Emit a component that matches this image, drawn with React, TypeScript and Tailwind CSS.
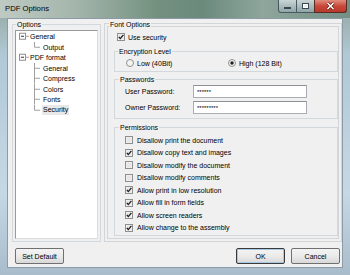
import React from 'react';

const CheckBox = ({ checked }: { checked?: boolean }) => (
  <svg width="8" height="8" viewBox="0 0 8 8" className="shrink-0">
    <rect x="0.5" y="0.5" width="7" height="7" fill="#f6f6f6" stroke="#8e8f8f" />
    <rect x="1.5" y="1.5" width="5" height="5" fill="#e6e6e6" />
    {checked && <path d="M1.8 3.8 L3.3 5.6 L6.4 1.9" fill="none" stroke="#1c1c1c" strokeWidth="1.3" />}
  </svg>
);

const Radio = ({ checked }: { checked?: boolean }) => (
  <svg width="8" height="8" viewBox="0 0 8 8" className="shrink-0">
    <circle cx="4" cy="4" r="3.5" fill="#f4f4f4" stroke="#8e8f8f" />
    {checked && <circle cx="4" cy="4" r="1.7" fill="#1e1e1e" />}
  </svg>
);

const RootRow = ({ label }: { label: string }) => (
  <div className="flex h-[10.5px] items-center">
    <svg width="14" height="10.5" viewBox="0 0 14 10.5" className="shrink-0">
      <rect x="3.5" y="2.25" width="6" height="6" fill="#fff" stroke="#8f8f8f" />
      <path d="M5 5.25 H8" stroke="#333" strokeWidth="1" />
      <path d="M9.5 5.25 H13" stroke="#a0a0a0" strokeWidth="1" />
    </svg>
    <span>{label}</span>
  </div>
);

const ChildRow = ({ label, last, selected }: { label: string; last?: boolean; selected?: boolean }) => (
  <div className="flex h-[10.5px] items-center">
    <svg width="27" height="10.5" viewBox="0 0 27 10.5" className="shrink-0">
      <path d={last ? 'M18.5 0 V5.25' : 'M18.5 0 V10.5'} stroke="#a0a0a0" strokeWidth="1" />
      <path d="M18.5 5.25 H24" stroke="#a0a0a0" strokeWidth="1" />
    </svg>
    <span className={selected ? 'bg-[#e8e8e8] px-[1px] -ml-[1px] leading-[10px]' : ''}>{label}</span>
  </div>
);

const Btn = ({ label, primary }: { label: string; primary?: boolean }) => (
  <button
    className={`flex h-[16px] w-[49px] items-center justify-center rounded-[2px] border bg-gradient-to-b from-[#f3f3f3] via-[#ebebeb] to-[#d8d8d8] text-[7px] text-black ${
      primary ? 'border-[#3a3a3a] shadow-[inset_0_0_0_1px_#a9c9e2]' : 'border-[#707070]'
    }`}
  >
    {label}
  </button>
);

const perms: [string, boolean][] = [
  ['Disallow print the document', false],
  ['Disallow copy text and images', true],
  ['Disallow modify the document', false],
  ['Disallow modify comments', false],
  ['Allow print in low resolution', true],
  ['Allow fill in form fields', true],
  ['Allow screen readers', true],
  ['Allow change to the assembly', true],
];

export default function App() {
  return (
    <div className="flex h-[275px] w-[350px] flex-col overflow-hidden bg-[linear-gradient(180deg,#8fa69c_0%,#b2c8d6_20%,#c5d8e6_70%,#a9bccb_100%)] font-['Liberation_Sans',Arial,sans-serif] text-[7px] leading-[9px] text-black">
      {/* title bar */}
      <div className="flex h-[18px] shrink-0 items-start justify-between bg-[linear-gradient(90deg,#bfcac3_0%,#a3b5ab_22%,#73907f_45%,#6b8a7c_58%,#8ea69b_75%,#748f86_100%)]">
        <span className="pl-[5px] pt-[4px] text-[7.7px] leading-[10px] text-black">PDF Options</span>
        <div className="mr-[3px] flex h-[13px]">
          <div className="flex w-[19px] items-center justify-center rounded-bl-[3px] border border-t-0 border-[#4a5862] bg-gradient-to-b from-[#c9d5d6] to-[#8fa5a6]">
            <div className="mt-[3px] h-[2px] w-[7px] border border-[#3a4650] bg-white" />
          </div>
          <div className="flex w-[17px] items-center justify-center border-b border-[#4a5862] bg-gradient-to-b from-[#c9d5d6] to-[#8fa5a6]">
            <div className="h-[6px] w-[7px] border border-[#3a4650] bg-[#e8eef0] shadow-[inset_0_0_0_1px_#fff]" />
          </div>
          <div className="flex w-[33px] items-center justify-center rounded-br-[3px] border border-t-0 border-[#5a2a24] bg-gradient-to-b from-[#e08c7e] via-[#c9483a] to-[#b8382a]">
            <svg width="9" height="8" viewBox="0 0 9 8">
              <path d="M1.5 1 L7.5 7 M7.5 1 L1.5 7" stroke="#5a1a14" strokeWidth="3" />
              <path d="M1.5 1 L7.5 7 M7.5 1 L1.5 7" stroke="#fff" strokeWidth="1.6" />
            </svg>
          </div>
        </div>
      </div>

      {/* dialog body */}
      <div className="mx-[7px] mb-[7px] flex flex-1 flex-col border border-[#8c9ba6] bg-[#f0f0f0]">
        <div className="mt-[1px] flex h-[222px] items-stretch">
          {/* options tree */}
          <fieldset className="ml-[4px] flex w-[89px] flex-col border border-[#d3d8dc] px-[2px] pb-[2px]">
            <legend className="ml-[1px] px-[1px] leading-[9px]">Options</legend>
            <div className="mt-[1px] flex-1 border border-[#9a9a9a] border-b-[#dcdcdc] border-r-[#dcdcdc] bg-white pt-[0.25px]">
              <RootRow label="General" />
              <ChildRow label="Output" last />
              <RootRow label="PDF format" />
              <ChildRow label="General" />
              <ChildRow label="Compress" />
              <ChildRow label="Colors" />
              <ChildRow label="Fonts" />
              <ChildRow label="Security" last selected />
            </div>
          </fieldset>

          {/* font options */}
          <fieldset className="ml-[3px] flex w-[237px] flex-col border-[4px] border-double border-[#d3d6d9]">
            <legend className="ml-[1px] px-[1px] leading-[9px]">Font Options</legend>

            <div className="ml-[9px] mt-[3px] flex h-[10px] items-center gap-[3px]">
              <CheckBox checked />
              <span>Use security</span>
            </div>

            <fieldset className="ml-[6px] mt-[5px] w-[224px] border border-[#d3d8dc] pb-[3px]">
              <legend className="ml-[3px] px-[1px] leading-[9px]">Encryption Level</legend>
              <div className="mt-[2px] flex h-[10px] items-center pl-[11px]">
                <div className="flex w-[102px] items-center gap-[3px]">
                  <Radio />
                  <span>Low (40Bit)</span>
                </div>
                <div className="flex items-center gap-[3px]">
                  <Radio checked />
                  <span>High (128 Bit)</span>
                </div>
              </div>
            </fieldset>

            <fieldset className="ml-[6px] mt-[3px] w-[224px] border border-[#d3d8dc] pb-[4px]">
              <legend className="ml-[4px] px-[1px] leading-[9px]">Passwords</legend>
              <div className="mt-[1px] flex h-[13px] items-center pl-[10px]">
                <span className="w-[68px]">User Password:</span>
                <div className="flex h-[13px] w-[114px] items-center border border-[#abadb3] border-t-[#8e9097] bg-white pl-[3px] text-[6px] leading-[6px]">
                  ******
                </div>
              </div>
              <div className="mt-[3px] flex h-[13px] items-center pl-[10px]">
                <span className="w-[68px]">Owner Password:</span>
                <div className="flex h-[13px] w-[114px] items-center border border-[#abadb3] border-t-[#8e9097] bg-white pl-[3px] text-[6px] leading-[6px]">
                  *********
                </div>
              </div>
            </fieldset>

            <fieldset className="ml-[6px] mt-[4px] w-[224px] border border-[#d3d8dc] pb-[1px]">
              <legend className="ml-[4px] px-[1px] leading-[9px]">Permissions</legend>
              <div className="mt-[2px] flex flex-col pl-[10px]">
                {perms.map(([label, on]) => (
                  <div key={label} className="flex h-[12.5px] items-center gap-[4px]">
                    <CheckBox checked={on} />
                    <span>{label}</span>
                  </div>
                ))}
              </div>
            </fieldset>
          </fieldset>
        </div>

        {/* buttons */}
        <div className="mt-[6px] flex items-center">
          <div className="ml-[7px]">
            <Btn label="Set Default" />
          </div>
          <div className="ml-auto mr-[2px] flex gap-[6px]">
            <Btn label="OK" primary />
            <Btn label="Cancel" />
          </div>
        </div>
      </div>
    </div>
  );
}
